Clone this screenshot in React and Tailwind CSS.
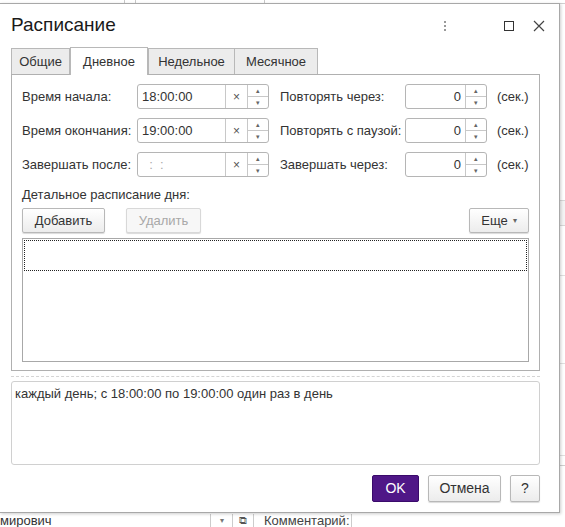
import React from "react";

const font = { fontFamily: '"Liberation Sans", Arial, sans-serif' };

const Spinner = () => (
	<div className="flex w-[21px] flex-col border-l border-[#c8c8c8]">
		<div className="flex flex-1 items-center justify-center border-b border-[#c8c8c8] text-[7px] leading-none text-[#666]">
			▴
		</div>
		<div className="flex flex-1 items-center justify-center text-[7px] leading-none text-[#666]">
			▾
		</div>
	</div>
);

const TimeField = ({ value, empty }) => (
	<div className="flex h-[25px] w-[132px] shrink-0 rounded-[3px] border border-[#b5b5b5] bg-white">
		<div
			className={
				"flex flex-1 items-center pl-[4px] text-[13px] " +
				(empty ? "text-[#aaa]" : "text-[#333]")
			}>
			{value}
		</div>
		<div className="flex w-[22px] items-center justify-center border-l border-[#c8c8c8] text-[12px] text-[#555]">
			×
		</div>
		<Spinner />
	</div>
);

const NumField = () => (
	<div className="flex h-[25px] w-[82px] shrink-0 rounded-[3px] border border-[#b5b5b5] bg-white">
		<div className="flex flex-1 items-center justify-end pr-[4px] text-[13px] text-[#333]">
			0
		</div>
		<Spinner />
	</div>
);

const Btn = ({ children, className = "", disabled }) => (
	<button
		className={
			"flex h-[25px] items-center justify-center rounded-[2px] border text-[13px] shadow-[0_1px_1px_rgba(0,0,0,0.15)] " +
			(disabled
				? "border-[#d8d8d8] bg-[#f7f7f7] text-[#a8a8a8] "
				: "border-[#b8b8b8] bg-gradient-to-b from-white to-[#ececec] text-[#333] ") +
			className
		}>
		{children}
	</button>
);

const rows = [
	["Время начала:", "18:00:00", "Повторять через:"],
	["Время окончания:", "19:00:00", "Повторять с паузой:"],
	["Завершать после:", "\u00a0\u00a0:\u00a0\u00a0:", "Завершать через:", true],
];

export default function App() {
	return (
		<div className="relative h-[527px] w-[565px] overflow-hidden bg-white" style={font}>
			{/* background behind the dialog */}
			<div className="flex h-[4px] gap-[10px] border-b border-[#d0d0d0]">
				<div className="w-[125px] border-r border-[#c8c8c8]" />
				<div className="w-[130px] border-x border-[#c8c8c8]" />
			</div>
			<div className="absolute right-0 top-[4px] flex h-[508px] w-[6px] flex-col">
				<div className="h-[196px]" />
				<div className="h-[26px] border-y border-[#d8d8d8] bg-[#f4f4f4]" />
				<div className="h-[50px] border-b border-[#e0e0e0]" />
				<div className="h-[88px] border-b border-[#e0e0e0]" />
				<div className="h-[92px] border-b border-[#e0e0e0]" />
				<div className="h-[10px] border-b border-[#d0d0d0]" />
			</div>
			<div className="absolute bottom-0 left-0 flex h-[14px] w-[565px] items-end text-[13px] leading-[13px] text-[#333]">
				<div className="w-[210px] pl-0">мирович</div>
				<div className="flex w-[22px] justify-center border-l border-[#ccc] text-[8px] text-[#777]">▾</div>
				<div className="flex w-[22px] justify-center border-x border-[#ccc] text-[11px] text-[#555]">⧉</div>
				<div className="w-[98px] border-r border-[#ccc] pl-[10px] text-[#444]">Комментарий:</div>
			</div>

			{/* dialog window */}
			<div className="absolute left-0 top-[3px] flex h-[510px] w-[560px] flex-col border-b border-r border-t border-[#a8a8a8] bg-white shadow-[1px_1px_3px_rgba(0,0,0,0.2)]">
				<div className="flex h-[43px] items-center pl-[11px] pr-[14px]">
					<div className="flex-1 text-[19px] text-[#1a1a1a]">Расписание</div>
					<div className="mr-[58px] flex flex-col gap-[2px]">
						<span className="h-[2px] w-[2px] bg-[#999]" />
						<span className="h-[2px] w-[2px] bg-[#999]" />
						<span className="h-[2px] w-[2px] bg-[#999]" />
					</div>
					<div className="mr-[19px] h-[10px] w-[10px] border border-[#333]" />
					<svg width="12" height="12" viewBox="0 0 12 12">
						<path d="M1 1L11 11M11 1L1 11" stroke="#444" strokeWidth="1.2" />
					</svg>
				</div>

				<div className="pl-[11px] pr-[19px]">
					{/* tabs */}
					<div className="flex h-[27px] items-end text-[13px] text-[#333]">
						<div className="flex h-[26px] w-[59px] items-center justify-center border border-b-0 border-[#b8b8b8] bg-[#ececec]">
							Общие
						</div>
						<div className="relative z-10 -mb-px flex h-[28px] w-[78px] items-center justify-center border border-b-0 border-[#b8b8b8] bg-white">
							Дневное
						</div>
						<div className="flex h-[26px] w-[87px] items-center justify-center border border-b-0 border-[#b8b8b8] bg-[#ececec]">
							Недельное
						</div>
						<div className="flex h-[26px] w-[83px] items-center justify-center border border-b-0 border-l-0 border-[#b8b8b8] bg-[#ececec]">
							Месячное
						</div>
					</div>

					{/* panel */}
					<div className="flex h-[297px] flex-col border border-[#b0b0b0] px-[10px] pt-[9px] text-[13px] text-[#333]">
						<div className="flex flex-col gap-[9px]">
							{rows.map(([l, v, r, empty]) => (
								<div key={l} className="flex items-center whitespace-nowrap">
									<div className="w-[115px] shrink-0">{l}</div>
									<TimeField value={v} empty={empty} />
									<div className="w-[136px] shrink-0 pl-[11px]">{r}</div>
									<NumField />
									<div className="pl-[10px]">(сек.)</div>
								</div>
							))}
						</div>
						<div className="mt-[10px] leading-[15px]">Детальное расписание дня:</div>
						<div className="mt-[6px] flex">
							<Btn className="w-[83px]">Добавить</Btn>
							<Btn className="ml-[21px] w-[75px]" disabled>
								Удалить
							</Btn>
							<div className="flex-1" />
							<Btn className="w-[60px] gap-[5px]">
								Еще <span className="text-[8px] text-[#666]">▾</span>
							</Btn>
						</div>
						<div className="mt-[5px] h-[124px] border border-[#a8a8a8] bg-white p-px">
							<div className="h-[31px] border border-dotted border-[#222]" />
						</div>
					</div>

					<div className="mt-[5px] border-t border-dashed border-[#d4d4d4]" />

					<div className="mt-[4px] h-[84px] rounded-[3px] border border-[#d0d0d0] px-[3px] pt-[2px] text-[13px] text-[#333]">
						каждый день; с 18:00:00 по 19:00:00 один раз в день
					</div>

					<div className="mt-[10px] flex justify-end gap-[9px]">
						<button className="h-[27px] w-[47px] rounded-[2px] border border-[#3a0a6b] bg-[#4f1787] text-[14px] text-white">
							OK
						</button>
						<Btn className="h-[27px] w-[73px] text-[14px]">Отмена</Btn>
						<Btn className="h-[27px] w-[30px] text-[14px]">?</Btn>
					</div>
				</div>
			</div>
		</div>
	);
}
